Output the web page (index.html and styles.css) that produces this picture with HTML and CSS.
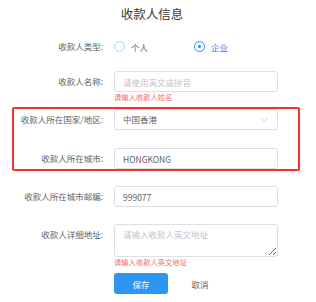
FILE: index.html
```html
<!DOCTYPE html>
<html>
<head>
    <title>收款人信息</title>
    <link rel="stylesheet" href="styles.css">
</head>
<body>
    <h1 class="title">收款人信息</h1>

    <form class="payee-form">
        <div class="form-item radio-row">
            <label class="form-label">收款人类型:</label>
            <div class="form-control radio-group">
                <span class="radio"><span class="radio-circle"></span>个人</span>
                <span class="radio checked"><span class="radio-circle"></span>企业</span>
            </div>
        </div>

        <div class="form-item">
            <label class="form-label">收款人名称:</label>
            <div class="form-control">
                <input class="text-input" type="text" placeholder="请使用英文或拼音">
                <div class="form-error">请输入收款人姓名</div>
            </div>
        </div>

        <!-- highlighted group: country + city -->
        <div class="highlight-group">
            <div class="form-item">
                <label class="form-label">收款人所在国家/地区:</label>
                <div class="form-control">
                    <div class="select-box">
                        <span>中国香港</span>
                        <svg class="select-arrow" width="7" height="4" viewBox="0 0 7 4"><polyline points="0.5,0.5 3.5,3.3 6.5,0.5" fill="none" stroke="#c0c4cc" stroke-width="0.8"/></svg>
                    </div>
                </div>
            </div>
            <div class="form-item">
                <label class="form-label">收款人所在城市:</label>
                <div class="form-control">
                    <input class="text-input" type="text" value="HONGKONG">
                </div>
            </div>
        </div>

        <div class="form-item">
            <label class="form-label">收款人所在城市邮编:</label>
            <div class="form-control">
                <input class="text-input" type="text" value="999077">
            </div>
        </div>

        <div class="form-item textarea-row">
            <label class="form-label">收款人详细地址:</label>
            <div class="form-control">
                <textarea class="text-area" placeholder="请输入收款人英文地址"></textarea>
                <div class="form-error">请输入收款人英文地址</div>
            </div>
        </div>

        <div class="form-item button-row">
            <div class="form-label"></div>
            <div class="form-control buttons">
                <button type="button" class="btn btn-primary">保存</button>
                <button type="button" class="btn btn-text">取消</button>
            </div>
        </div>
    </form>
</body>
</html>
```
FILE: styles.css
```css
body {
    margin: 0;
    background-color: #fff;
    font-family: "Noto Sans CJK SC", "Liberation Sans", sans-serif;
    color: #606266;
}
.title {
    margin: 5px 0 0;
    padding-right: 12px;
    font-size: 12.5px;
    line-height: 18px;
    font-weight: normal;
    color: #3a3a3a;
    text-align: center;
}
.payee-form {
    width: 278px;
    margin-top: 13px;
}
.form-item {
    display: flex;
    align-items: flex-start;
    margin-bottom: 17px;
    position: relative;
}
.form-label {
    width: 114px;
    flex-shrink: 0;
    box-sizing: border-box;
    padding-right: 11px;
    text-align: right;
    font-size: 8.5px;
    line-height: 21px;
    color: #606266;
}
.form-control {
    width: 164px;
    position: relative;
}
.radio-row {
    margin-bottom: 14px;
}
.radio-group {
    display: flex;
    height: 21px;
    align-items: center;
}
.radio {
    width: 80px;
    display: flex;
    align-items: center;
    font-size: 8.5px;
    color: #606266;
}
.radio-circle {
    width: 11px;
    height: 11px;
    box-sizing: border-box;
    border: 1px solid #a9d0f8;
    border-radius: 50%;
    margin-right: 6px;
    position: relative;
}
.radio.checked {
    color: #2d8cf0;
}
.radio.checked .radio-circle {
    border-color: #2d8cf0;
}
.radio.checked .radio-circle::after {
    content: "";
    position: absolute;
    left: 3px;
    top: 3px;
    width: 3px;
    height: 3px;
    border-radius: 50%;
    background-color: #2d8cf0;
}
.text-input,
.select-box,
.text-area {
    width: 164px;
    box-sizing: border-box;
    border: 1px solid #dcdfe6;
    border-radius: 3px;
    padding: 0 8px;
    font-family: inherit;
    font-size: 8.5px;
    color: #606266;
    background-color: #fff;
    outline: none;
    display: block;
    margin: 0;
}
.text-input,
.select-box {
    height: 21px;
    line-height: 19px;
}
.text-input::placeholder,
.text-area::placeholder {
    color: #c0c4cc;
}
.select-box {
    display: flex;
    align-items: center;
    justify-content: space-between;
}
.select-arrow {
    margin-right: 1px;
}
.highlight-group {
    position: relative;
    margin-bottom: 17px;
}
.highlight-group .form-item:first-child {
    margin-bottom: 18px;
}
.highlight-group .form-item:last-child {
    margin-bottom: 0;
}
.highlight-group::after {
    content: "";
    position: absolute;
    left: 12px;
    right: -22px;
    top: -2px;
    bottom: -2px;
    border: 2px solid #f3302b;
    border-radius: 2px;
}
.text-area {
    height: 33px;
    padding-top: 3px;
    line-height: 13px;
    resize: vertical;
}
.textarea-row {
    margin-bottom: 16px;
}
.form-error {
    position: absolute;
    left: 0;
    top: 100%;
    margin-top: 1px;
    font-size: 7.3px;
    line-height: 9px;
    color: #f56c6c;
    white-space: nowrap;
}
.buttons {
    display: flex;
    gap: 5px;
}
.btn {
    width: 54px;
    height: 21px;
    border: none;
    border-radius: 3px;
    padding: 0;
    font-family: inherit;
    font-size: 8.5px;
    cursor: pointer;
}
.btn-primary {
    background-color: #2d96f0;
    color: #fff;
}
.btn-text {
    background-color: transparent;
    color: #606266;
}
```
